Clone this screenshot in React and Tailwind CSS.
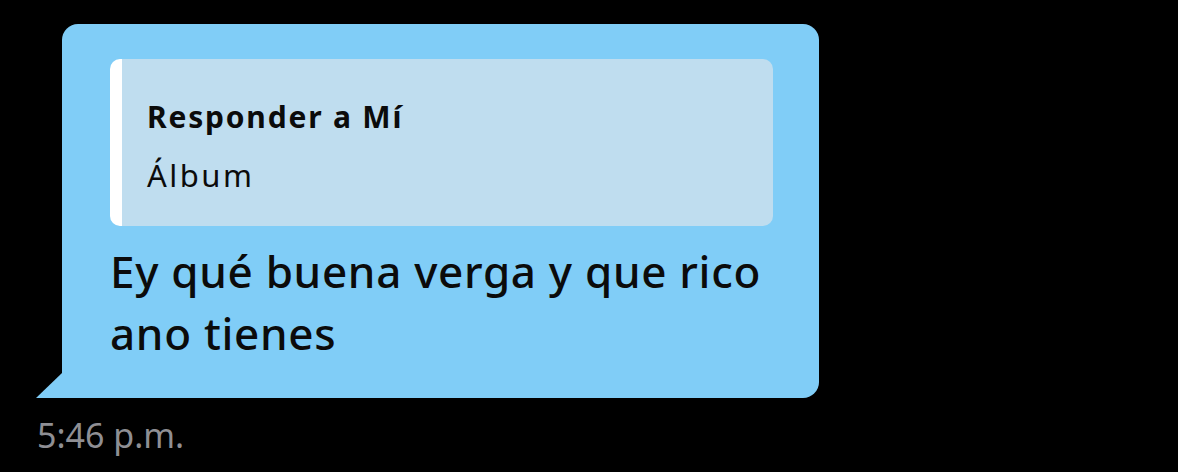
export default function App() {
  return (
    <div className="h-[472px] w-[1178px] overflow-hidden bg-black font-['Noto_Sans',sans-serif]">
      <div className="pt-[24px] pl-[62px]">
        {/* Message bubble */}
        <div className="relative w-[757px] rounded-[16px] rounded-bl-none bg-[#80cdf7] pl-[48px] pr-[46px] pt-[35px] pb-[34px]">
          {/* Reply quote */}
          <div className="h-[167px] rounded-[10px] border-l-[12px] border-white bg-[#bfddef] pl-[25px] pt-[28px]">
            <div className="text-[30px] leading-[59px] font-bold tracking-[1.8px] text-[#0b0b0b]">Responder a Mí</div>
            <div className="text-[31px] leading-[59px] tracking-[2.5px] text-[#0b0b0b]">Álbum</div>
          </div>
          <p className="mt-[14px] text-[44px] leading-[62px] font-medium tracking-[0.7px] text-[#0b0b0b]">
            Ey qué buena verga y que rico ano tienes
          </p>
          {/* Tail */}
          <svg
            className="absolute left-[-26px] bottom-0"
            width="26"
            height="25"
            viewBox="0 0 26 25"
          >
            <path d="M26 0 L26 25 L0 25 Z" fill="#80cdf7" />
          </svg>
        </div>
      </div>
      <div className="pl-[37px] pt-[14px] text-[34px] leading-[46px] text-[#8f8f94]">5:46 p.m.</div>
    </div>
  );
}
